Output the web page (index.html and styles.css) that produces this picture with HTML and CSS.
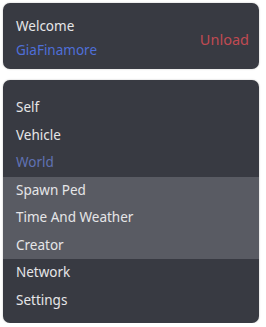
FILE: index.html
```html
<!DOCTYPE html>
<html lang="en">
<head>
  <meta charset="UTF-8">
  <title>Menu</title>
  <link rel="stylesheet" href="styles.css">
</head>
<body>

<div class="panel header">
  <div class="user">
    <div class="welcome">Welcome</div>
    <div class="name">GiaFinamore</div>
  </div>
  <div class="unload">Unload</div>
</div>

<div class="panel menu">
  <div class="item">Self</div>
  <div class="item">Vehicle</div>
  <div class="item active">World</div>
  <div class="sub">
    <div class="item">Spawn Ped</div>
    <div class="item">Time And Weather</div>
    <div class="item">Creator</div>
  </div>
  <div class="item">Network</div>
  <div class="item">Settings</div>
</div>

</body>
</html>
```
FILE: styles.css
```css
body {
  margin: 0;
  padding: 3px 7px 0 3px;
  background: #ffffff;
  font-family: 'Noto Sans', sans-serif;
  font-size: 13.5px;
  color: #e6e6e8;
}

.panel {
  background: #383a42;
  border-radius: 7px;
  box-shadow: 0 0 2px rgba(0, 0, 0, 0.25);
}

.header {
  height: 66px;
  display: flex;
  align-items: center;
  justify-content: space-between;
  padding: 3px 10px 0 13px;
  box-sizing: border-box;
}

.user {
  display: flex;
  flex-direction: column;
  gap: 6px;
}

.name {
  color: #4f6fd8;
}

.unload {
  color: #c04a52;
  font-size: 14.5px;
  margin-top: 2px;
}

.menu {
  margin-top: 11px;
  padding: 14px 0 9px;
  overflow: hidden;
}

.item {
  height: 27.5px;
  line-height: 27.5px;
  padding-left: 13px;
}

.active {
  color: #6072b4;
}

.sub {
  background: #595b63;
}
```
